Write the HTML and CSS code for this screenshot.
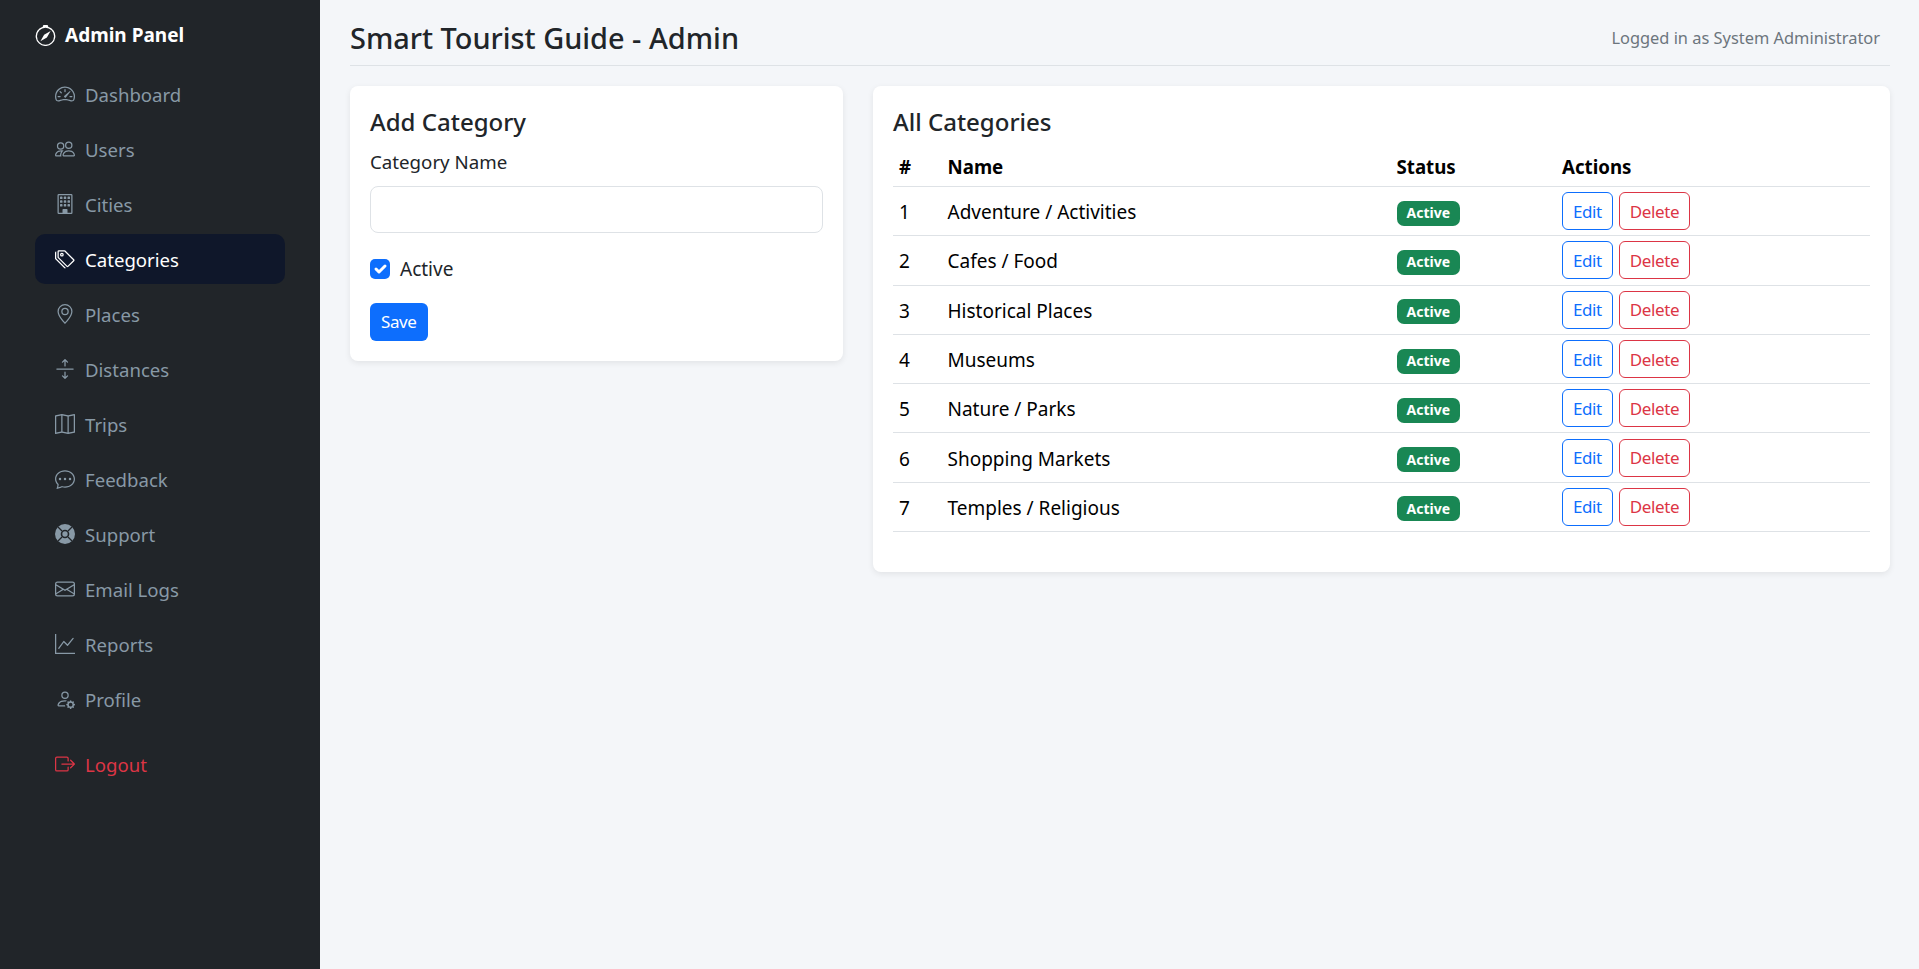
FILE: index.html
```html
<!DOCTYPE html>
<html lang="en">
<head>
  <meta charset="UTF-8" />
  <meta name="viewport" content="width=device-width, initial-scale=1.0"/>
  <title>Smart Tourist Guide - Admin</title>
  <link rel="stylesheet" href="styles.css">
</head>
<body>

  <div class="layout">
    <aside class="sidebar">
      <div class="brand">
        <svg class="brand-icon" viewBox="0 0 16 16" fill="currentColor"><path d="M8 16.016a7.5 7.5 0 0 0 1.962-14.74A1 1 0 0 0 9 0H7a1 1 0 0 0-.962 1.276A7.5 7.5 0 0 0 8 16.016m6.5-7.5a6.5 6.5 0 1 1-13 0 6.5 6.5 0 0 1 13 0"/><path d="m6.94 7.44 4.95-2.83-2.83 4.95-4.949 2.83 2.828-4.95z"/></svg>
        <span>Admin Panel</span>
      </div>
      <nav class="nav">
        <a class="nav-link" href="#">
          <svg class="icon" viewBox="0 0 16 16" fill="currentColor"><path d="M8 4a.5.5 0 0 1 .5.5V6a.5.5 0 0 1-1 0V4.5A.5.5 0 0 1 8 4M3.732 5.732a.5.5 0 0 1 .707 0l.915.914a.5.5 0 1 1-.708.708l-.914-.915a.5.5 0 0 1 0-.707M2 10a.5.5 0 0 1 .5-.5h1.586a.5.5 0 0 1 0 1H2.5A.5.5 0 0 1 2 10m9.5 0a.5.5 0 0 1 .5-.5h1.5a.5.5 0 0 1 0 1H12a.5.5 0 0 1-.5-.5m.754-4.246a.39.39 0 0 0-.527-.02L7.547 9.31a.91.91 0 1 0 1.302 1.258l3.434-4.297a.39.39 0 0 0-.029-.518z"/><path fill-rule="evenodd" d="M0 10a8 8 0 1 1 15.547 2.661c-.442 1.253-1.845 1.602-2.932 1.25C11.309 13.488 9.475 13 8 13c-1.474 0-3.31.488-4.615.911-1.087.352-2.49.003-2.932-1.25A8 8 0 0 1 0 10m8-7a7 7 0 0 0-6.603 9.329c.203.575.923.876 1.68.63C4.397 12.533 6.358 12 8 12s3.604.532 4.923.96c.757.245 1.477-.056 1.68-.631A7 7 0 0 0 8 3"/></svg>
          Dashboard
        </a>
        <a class="nav-link" href="#">
          <svg class="icon" viewBox="0 0 16 16" fill="currentColor"><path d="M15 14s1 0 1-1-1-4-5-4-5 3-5 4 1 1 1 1zm-7.978-1L7 12.996c.001-.264.167-1.03.76-1.72C8.312 10.629 9.282 10 11 10c1.717 0 2.687.63 3.24 1.276.593.69.758 1.457.76 1.72l-.008.002-.014.002zM11 7a2 2 0 1 0 0-4 2 2 0 0 0 0 4m3-2a3 3 0 1 1-6 0 3 3 0 0 1 6 0M6.936 9.28a6 6 0 0 0-1.23-.247A7 7 0 0 0 5 9c-4 0-5 3-5 4q0 1 1 1h4.216A2.24 2.24 0 0 1 5 13c0-1.01.377-2.042 1.09-2.904.243-.294.526-.569.846-.816M4.92 10A5.5 5.5 0 0 0 4 13H1c0-.26.164-1.03.76-1.724.545-.636 1.492-1.256 3.16-1.275ZM1.5 5.5a3 3 0 1 1 6 0 3 3 0 0 1-6 0m3-2a2 2 0 1 0 0 4 2 2 0 0 0 0-4"/></svg>
          Users
        </a>
        <a class="nav-link" href="#">
          <svg class="icon" viewBox="0 0 16 16" fill="currentColor"><path d="M4 2.5a.5.5 0 0 1 .5-.5h1a.5.5 0 0 1 .5.5v1a.5.5 0 0 1-.5.5h-1a.5.5 0 0 1-.5-.5zm3 0a.5.5 0 0 1 .5-.5h1a.5.5 0 0 1 .5.5v1a.5.5 0 0 1-.5.5h-1a.5.5 0 0 1-.5-.5zm3.5-.5a.5.5 0 0 0-.5.5v1a.5.5 0 0 0 .5.5h1a.5.5 0 0 0 .5-.5v-1a.5.5 0 0 0-.5-.5zM4 5.5a.5.5 0 0 1 .5-.5h1a.5.5 0 0 1 .5.5v1a.5.5 0 0 1-.5.5h-1a.5.5 0 0 1-.5-.5zM7.5 5a.5.5 0 0 0-.5.5v1a.5.5 0 0 0 .5.5h1a.5.5 0 0 0 .5-.5v-1a.5.5 0 0 0-.5-.5zm2.5.5a.5.5 0 0 1 .5-.5h1a.5.5 0 0 1 .5.5v1a.5.5 0 0 1-.5.5h-1a.5.5 0 0 1-.5-.5zM4.5 8a.5.5 0 0 0-.5.5v1a.5.5 0 0 0 .5.5h1a.5.5 0 0 0 .5-.5v-1a.5.5 0 0 0-.5-.5zm2.5.5a.5.5 0 0 1 .5-.5h1a.5.5 0 0 1 .5.5v1a.5.5 0 0 1-.5.5h-1a.5.5 0 0 1-.5-.5zm3.5-.5a.5.5 0 0 0-.5.5v1a.5.5 0 0 0 .5.5h1a.5.5 0 0 0 .5-.5v-1a.5.5 0 0 0-.5-.5z"/><path d="M2 1a1 1 0 0 1 1-1h10a1 1 0 0 1 1 1v14a1 1 0 0 1-1 1H3a1 1 0 0 1-1-1zm11 0H3v14h3v-2.5a.5.5 0 0 1 .5-.5h3a.5.5 0 0 1 .5.5V15h3z"/></svg>
          Cities
        </a>
        <a class="nav-link active" href="#">
          <svg class="icon" viewBox="0 0 16 16" fill="currentColor"><path d="M3 2v4.586l7 7L14.586 9l-7-7zM2 2a1 1 0 0 1 1-1h4.586a1 1 0 0 1 .707.293l7 7a1 1 0 0 1 0 1.414l-4.586 4.586a1 1 0 0 1-1.414 0l-7-7A1 1 0 0 1 2 6.586z"/><path d="M5.5 5a.5.5 0 1 1 0-1 .5.5 0 0 1 0 1m0 1a1.5 1.5 0 1 0 0-3 1.5 1.5 0 0 0 0 3M1 7.086a1 1 0 0 0 .293.707L8.75 15.25l-.043.043a1 1 0 0 1-1.414 0l-7-7A1 1 0 0 1 0 7.586V3a1 1 0 0 1 1-1z"/></svg>
          Categories
        </a>
        <a class="nav-link" href="#">
          <svg class="icon" viewBox="0 0 16 16" fill="currentColor"><path d="M12.166 8.94c-.524 1.062-1.234 2.12-1.96 3.07A32 32 0 0 1 8 14.58a32 32 0 0 1-2.206-2.57c-.726-.95-1.436-2.008-1.96-3.07C3.304 7.867 3 6.862 3 6a5 5 0 0 1 10 0c0 .862-.305 1.867-.834 2.94M8 16s6-5.686 6-10A6 6 0 0 0 2 6c0 4.314 6 10 6 10"/><path d="M8 8a2 2 0 1 1 0-4 2 2 0 0 1 0 4m0 1a3 3 0 1 0 0-6 3 3 0 0 0 0 6"/></svg>
          Places
        </a>
        <a class="nav-link" href="#">
          <svg class="icon" viewBox="0 0 16 16" fill="currentColor"><path fill-rule="evenodd" d="M1 8a.5.5 0 0 1 .5-.5h13a.5.5 0 0 1 0 1h-13A.5.5 0 0 1 1 8M7.646.146a.5.5 0 0 1 .708 0l2 2a.5.5 0 0 1-.708.708L8.5 1.707V5.5a.5.5 0 0 1-1 0V1.707L6.354 2.854a.5.5 0 1 1-.708-.708zM8 10a.5.5 0 0 1 .5.5v3.793l1.146-1.147a.5.5 0 0 1 .708.708l-2 2a.5.5 0 0 1-.708 0l-2-2a.5.5 0 0 1 .708-.708L7.5 14.293V10.5A.5.5 0 0 1 8 10"/></svg>
          Distances
        </a>
        <a class="nav-link" href="#">
          <svg class="icon" viewBox="0 0 16 16" fill="currentColor"><path fill-rule="evenodd" d="M15.817.113A.5.5 0 0 1 16 .5v14a.5.5 0 0 1-.402.49l-5 1a.5.5 0 0 1-.196 0L5.5 15.01l-4.902.98A.5.5 0 0 1 0 15.5v-14a.5.5 0 0 1 .402-.49l5-1a.5.5 0 0 1 .196 0L10.5.99l4.902-.98a.5.5 0 0 1 .415.103M10 1.91l-4-.8v12.98l4 .8zm1 12.98 4-.8V1.11l-4 .8zm-6-.8V1.11l-4 .8v12.98z"/></svg>
          Trips
        </a>
        <a class="nav-link" href="#">
          <svg class="icon" viewBox="0 0 16 16" fill="currentColor"><path d="M5 8a1 1 0 1 1-2 0 1 1 0 0 1 2 0m4 0a1 1 0 1 1-2 0 1 1 0 0 1 2 0m3 1a1 1 0 1 0 0-2 1 1 0 0 0 0 2"/><path d="m2.165 15.803.02-.004c1.83-.363 2.948-.842 3.468-1.105A9 9 0 0 0 8 15c4.418 0 8-3.134 8-7s-3.582-7-8-7-8 3.134-8 7c0 1.76.743 3.37 1.97 4.6a10.4 10.4 0 0 1-.524 2.318l-.003.011a11 11 0 0 1-.244.637c-.079.186.074.394.273.362a22 22 0 0 0 .693-.125m.8-3.108a1 1 0 0 0-.287-.801C1.618 10.83 1 9.468 1 8c0-3.192 3.004-6 7-6s7 2.808 7 6-3.004 6-7 6a8 8 0 0 1-2.088-.272 1 1 0 0 0-.711.074c-.387.196-1.24.57-2.634.893a11 11 0 0 0 .398-2"/></svg>
          Feedback
        </a>
        <a class="nav-link" href="#">
          <svg class="icon" viewBox="0 0 16 16" fill="currentColor"><circle cx="8" cy="8" r="8"/><path fill="none" stroke="#212529" d="M2.4 2.4 5.6 5.6M13.6 2.4 10.4 5.6M13.6 13.6 10.4 10.4M2.4 13.6 5.6 10.4"/><circle cx="8" cy="8" r="2.8" stroke="#212529" stroke-width="1.3"/></svg>
          Support
        </a>
        <a class="nav-link" href="#">
          <svg class="icon" viewBox="0 0 16 16" fill="currentColor"><path d="M0 4a2 2 0 0 1 2-2h12a2 2 0 0 1 2 2v8a2 2 0 0 1-2 2H2a2 2 0 0 1-2-2zm2-1a1 1 0 0 0-1 1v.217l7 4.2 7-4.2V4a1 1 0 0 0-1-1zm13 2.383-4.708 2.825L15 11.105zm-.034 6.876-5.64-3.471L8 9.583l-1.326-.795-5.64 3.47A1 1 0 0 0 2 13h12a1 1 0 0 0 .966-.741M1 11.105l4.708-2.897L1 5.383z"/></svg>
          Email Logs
        </a>
        <a class="nav-link" href="#">
          <svg class="icon" viewBox="0 0 16 16" fill="currentColor"><path fill-rule="evenodd" d="M0 0h1v15h15v1H0zm14.817 3.113a.5.5 0 0 1 .07.704l-4.5 5.5a.5.5 0 0 1-.74.037L7.06 6.767l-3.656 5.027a.5.5 0 0 1-.808-.588l4-5.5a.5.5 0 0 1 .758-.06l2.609 2.61 4.15-5.073a.5.5 0 0 1 .704-.07"/></svg>
          Reports
        </a>
        <a class="nav-link" href="#">
          <svg class="icon" viewBox="0 0 16 16" fill="currentColor"><path d="M11 5a3 3 0 1 1-6 0 3 3 0 0 1 6 0M8 7a2 2 0 1 0 0-4 2 2 0 0 0 0 4m.256 7a4.5 4.5 0 0 1-.229-1.004H3c.001-.246.154-.986.832-1.664C4.484 10.68 5.711 10 8 10q.39 0 .74.025c.226-.341.496-.65.804-.918Q8.844 9.002 8 9c-5 0-6 3-6 4s1 1 1 1zm3.63-4.54c.18-.613 1.048-.613 1.229 0l.043.148a.64.64 0 0 0 .921.382l.136-.074c.561-.306 1.175.308.87.869l-.075.136a.64.64 0 0 0 .382.92l.149.045c.612.18.612 1.048 0 1.229l-.15.043a.64.64 0 0 0-.38.921l.074.136c.305.561-.309 1.175-.87.87l-.136-.075a.64.64 0 0 0-.92.382l-.045.149c-.18.612-1.048.612-1.229 0l-.043-.15a.64.64 0 0 0-.921-.38l-.136.074c-.561.305-1.175-.309-.87-.87l.075-.136a.64.64 0 0 0-.382-.92l-.148-.045c-.613-.18-.613-1.048 0-1.229l.148-.043a.64.64 0 0 0 .382-.921l-.074-.136c-.306-.561.308-1.175.869-.87l.136.075a.64.64 0 0 0 .92-.382zM14 12.5a1.5 1.5 0 1 0-3 0 1.5 1.5 0 0 0 3 0"/></svg>
          Profile
        </a>
        <a class="nav-link logout" href="#">
          <svg class="icon" viewBox="0 0 16 16" fill="currentColor"><path fill-rule="evenodd" d="M10 12.5a.5.5 0 0 1-.5.5h-8a.5.5 0 0 1-.5-.5v-9a.5.5 0 0 1 .5-.5h8a.5.5 0 0 1 .5.5v2a.5.5 0 0 0 1 0v-2A1.5 1.5 0 0 0 9.5 2h-8A1.5 1.5 0 0 0 0 3.5v9A1.5 1.5 0 0 0 1.5 14h8a1.5 1.5 0 0 0 1.5-1.5v-2a.5.5 0 0 0-1 0z"/><path fill-rule="evenodd" d="M15.854 8.354a.5.5 0 0 0 0-.708l-3-3a.5.5 0 0 0-.708.708L14.293 7.5H5.5a.5.5 0 0 0 0 1h8.793l-2.147 2.146a.5.5 0 0 0 .708.708z"/></svg>
          Logout
        </a>
      </nav>
    </aside>

    <main class="content">
      <header class="topbar">
        <h1>Smart Tourist Guide - Admin</h1>
        <span class="user">Logged in as System Administrator</span>
      </header>

      <div class="columns">
        <section class="card form-card">
          <h2>Add Category</h2>
          <label class="field-label" for="name">Category Name</label>
          <input class="field" id="name" type="text">
          <label class="check">
            <span class="check-box">
              <svg viewBox="0 0 20 20"><path fill="none" stroke="#fff" stroke-linecap="round" stroke-linejoin="round" stroke-width="3" d="m6 10 3 3 6-6"/></svg>
            </span>
            Active
          </label>
          <button class="btn btn-primary">Save</button>
        </section>

        <section class="card list-card">
          <h2>All Categories</h2>
          <table>
            <thead>
              <tr><th class="col-id">#</th><th class="col-name">Name</th><th class="col-status">Status</th><th>Actions</th></tr>
            </thead>
            <tbody>
              <tr><td class="cell-text">1</td><td class="cell-text">Adventure / Activities</td><td><span class="badge">Active</span></td><td><button class="btn btn-edit">Edit</button><button class="btn btn-delete">Delete</button></td></tr>
              <tr><td class="cell-text">2</td><td class="cell-text">Cafes / Food</td><td><span class="badge">Active</span></td><td><button class="btn btn-edit">Edit</button><button class="btn btn-delete">Delete</button></td></tr>
              <tr><td class="cell-text">3</td><td class="cell-text">Historical Places</td><td><span class="badge">Active</span></td><td><button class="btn btn-edit">Edit</button><button class="btn btn-delete">Delete</button></td></tr>
              <tr><td class="cell-text">4</td><td class="cell-text">Museums</td><td><span class="badge">Active</span></td><td><button class="btn btn-edit">Edit</button><button class="btn btn-delete">Delete</button></td></tr>
              <tr><td class="cell-text">5</td><td class="cell-text">Nature / Parks</td><td><span class="badge">Active</span></td><td><button class="btn btn-edit">Edit</button><button class="btn btn-delete">Delete</button></td></tr>
              <tr><td class="cell-text">6</td><td class="cell-text">Shopping Markets</td><td><span class="badge">Active</span></td><td><button class="btn btn-edit">Edit</button><button class="btn btn-delete">Delete</button></td></tr>
              <tr><td class="cell-text">7</td><td class="cell-text">Temples / Religious</td><td><span class="badge">Active</span></td><td><button class="btn btn-edit">Edit</button><button class="btn btn-delete">Delete</button></td></tr>
            </tbody>
          </table>
        </section>
      </div>
    </main>
  </div>

</body>
</html>
```

FILE: styles.css
```css
* {
  box-sizing: border-box;
}

body {
  margin: 0;
  background-color: #f4f6f9;
  color: #212529;
  font-family: 'Noto Sans', sans-serif;
  font-size: 19px;
}

.layout {
  display: flex;
  min-height: 969px;
}

.sidebar {
  width: 320px;
  flex-shrink: 0;
  background-color: #212529;
  padding: 20px 35px;
}

.brand {
  display: flex;
  align-items: center;
  gap: 9px;
  height: 30px;
  margin-bottom: 19px;
  color: #fff;
  font-size: 19px;
  font-weight: 700;
}

.brand-icon {
  width: 21px;
  height: 21px;
}

.nav {
  display: flex;
  flex-direction: column;
  gap: 5px;
  width: 250px;
}

.nav-link {
  display: flex;
  align-items: center;
  gap: 10px;
  height: 50px;
  padding-left: 20px;
  border-radius: 10px;
  color: #8899a6;
  font-size: 18.6px;
  text-decoration: none;
}

.nav-link .icon {
  width: 20px;
  height: 20px;
}

.nav-link.active {
  background-color: #0f172a;
  color: #fff;
}

.nav-link.logout {
  margin-top: 10px;
  color: #dc3545;
}

.content {
  flex: 1;
  min-width: 0;
  padding: 16px 29px 0 30px;
}

.topbar {
  display: flex;
  justify-content: space-between;
  align-items: center;
  height: 50px;
  padding: 0 10px 6px 0;
  border-bottom: 1px solid #dee2e6;
  margin-bottom: 20px;
}

.topbar h1 {
  margin: 0;
  font-size: 28.9px;
  font-weight: 500;
}

.user {
  color: #6c757d;
  font-size: 16.4px;
}

.columns {
  display: flex;
  align-items: flex-start;
  gap: 30px;
}

.card {
  background-color: #fff;
  border-radius: 8px;
  padding: 20px;
  box-shadow: 0 2px 6px rgba(0,0,0,0.08);
}

.card h2 {
  margin: 0;
  font-size: 24px;
  font-weight: 500;
  line-height: 31px;
}

.form-card {
  width: 493px;
  flex-shrink: 0;
}

.list-card {
  flex: 1;
  min-width: 0;
  height: 486px;
}

.field-label {
  display: block;
  margin: 13px 0 12px;
  font-size: 18.7px;
  line-height: 24px;
}

.field {
  display: block;
  width: 100%;
  height: 47px;
  border: 1px solid #dee2e6;
  border-radius: 8px;
  background: #fff;
}

.check {
  display: flex;
  align-items: center;
  gap: 10px;
  margin: 24px 0 21.5px;
  line-height: 24px;
}

.check-box {
  display: block;
  width: 20px;
  height: 20px;
  border-radius: 5px;
  background-color: #0d6efd;
}

.check-box svg {
  display: block;
}

.btn {
  border: 1px solid transparent;
  border-radius: 6px;
  background: none;
  font-family: inherit;
  font-size: 17px;
  letter-spacing: -0.4px;
}

.btn-primary {
  display: block;
  height: 38.5px;
  padding: 0 10px;
  background-color: #0d6efd;
  color: #fff;
}

table {
  width: 100%;
  margin-top: 9px;
  border-collapse: collapse;
  color: #000;
}

th {
  height: 40.5px;
  padding: 0 6px;
  border-bottom: 1px solid #dee2e6;
  text-align: left;
  font-size: 18.7px;
  font-weight: 700;
}

td {
  height: 49.3px;
  padding: 0 6px;
  border-bottom: 1px solid #dee2e6;
}

td.cell-text {
  padding-top: 2px;
}

.col-id {
  width: 48.5px;
}

.col-name {
  width: 449px;
}

.col-status {
  width: 165.5px;
}

.badge {
  display: inline-block;
  margin-top: 4px;
  padding: 3.5px 10px;
  border-radius: 7px;
  background-color: #198754;
  color: #fff;
  font-size: 14px;
  font-weight: 700;
  line-height: 18px;
}

.btn-edit,
.btn-delete {
  height: 38px;
  padding: 0 10px;
  margin-right: 6px;
}

.btn-edit {
  border-color: #0d6efd;
  color: #0d6efd;
}

.btn-delete {
  border-color: #dc3545;
  color: #dc3545;
}
```
